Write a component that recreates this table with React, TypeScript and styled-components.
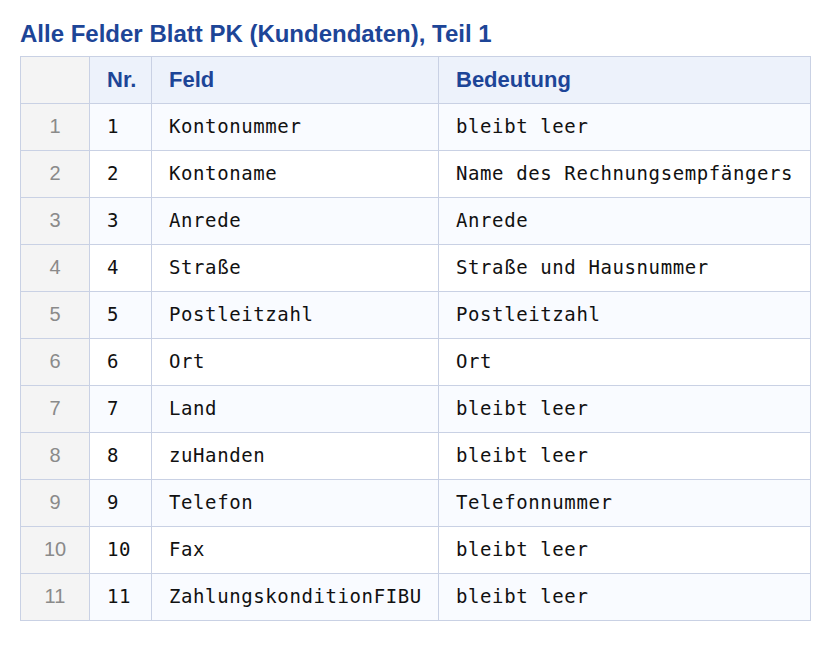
import styled, { createGlobalStyle } from 'styled-components';

const GlobalStyle = createGlobalStyle`
  body {
    margin: 0;
    background: #ffffff;
    font-family: "Liberation Sans", Arial, sans-serif;
  }
`;

const rows: [string, string][] = [
  ['Kontonummer', 'bleibt leer'],
  ['Kontoname', 'Name des Rechnungsempfängers'],
  ['Anrede', 'Anrede'],
  ['Straße', 'Straße und Hausnummer'],
  ['Postleitzahl', 'Postleitzahl'],
  ['Ort', 'Ort'],
  ['Land', 'bleibt leer'],
  ['zuHanden', 'bleibt leer'],
  ['Telefon', 'Telefonnummer'],
  ['Fax', 'bleibt leer'],
  ['ZahlungskonditionFIBU', 'bleibt leer'],
];

export default function App() {
  return (
    <>
      <GlobalStyle />
      <Page>
        <Title>Alle Felder Blatt PK (Kundendaten), Teil 1</Title>
        <Table>
          <colgroup>
            <col style={{ width: 69 }} />
            <col style={{ width: 62 }} />
            <col style={{ width: 287 }} />
            <col />
          </colgroup>
          <thead>
            <tr>
              <Corner />
              <Head>Nr.</Head>
              <Head>Feld</Head>
              <Head>Bedeutung</Head>
            </tr>
          </thead>
          <tbody>
            {rows.map(([feld, bedeutung], i) => (
              <Row key={i} $odd={i % 2 === 0}>
                <Index>{i + 1}</Index>
                <Cell>{i + 1}</Cell>
                <Cell>{feld}</Cell>
                <Cell>{bedeutung}</Cell>
              </Row>
            ))}
          </tbody>
        </Table>
      </Page>
    </>
  );
}

const Page = styled.div`
  padding: 20px 22px 20px 20px;
`;

const Title = styled.h2`
  margin: 0 0 8px 0;
  font-size: 24px;
  line-height: 28px;
  font-weight: bold;
  color: #1d4597;
`;

const Table = styled.table`
  width: 791px;
  border-collapse: collapse;
  table-layout: fixed;
`;

const Corner = styled.th`
  background: #f4f4f4;
  border: 1px solid #c9d1e4;
  height: 46px;
  padding: 0;
`;

const Head = styled.th`
  background: #edf2fb;
  border: 1px solid #c9d1e4;
  color: #1d4597;
  font-size: 22px;
  line-height: 26px;
  font-weight: bold;
  text-align: left;
  padding: 0 17px;
  height: 46px;
`;

const Row = styled.tr<{ $odd: boolean }>`
  background: ${(p) => (p.$odd ? '#f9fbff' : '#ffffff')};
`;

const Index = styled.td`
  background: #f4f4f4;
  border: 1px solid #c9d1e4;
  color: #8a8a8a;
  font-size: 20px;
  text-align: center;
  height: 45px;
  padding: 0 0 1px 0;
`;

const Cell = styled.td`
  border: 1px solid #c9d1e4;
  font-family: "DejaVu Sans Mono", "Liberation Mono", monospace;
  font-size: 19px;
  line-height: 22px;
  letter-spacing: 0.6px;
  color: #111111;
  padding: 0 17px 3px 17px;
  height: 43px;
  white-space: nowrap;
`;
